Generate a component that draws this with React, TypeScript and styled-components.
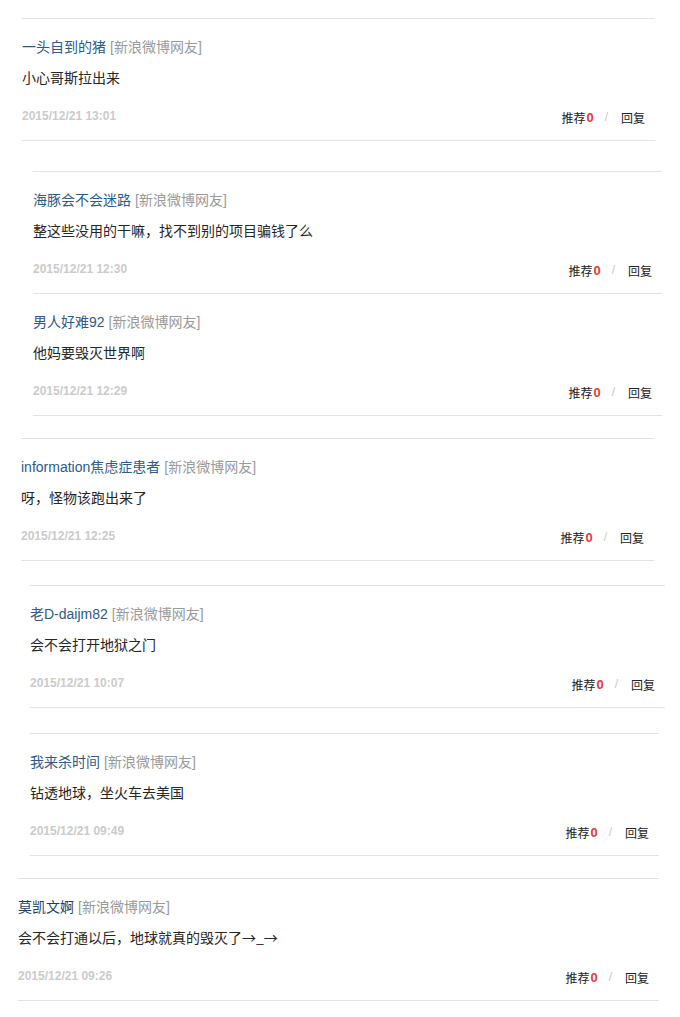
import { createGlobalStyle, styled } from 'styled-components'

const GlobalStyle = createGlobalStyle`
	html, body {
		margin: 0;
		padding: 0;
		background: #fff;
	}
	body {
		font-family: 'Liberation Sans', 'Noto Sans CJK SC', sans-serif;
		color: #333;
	}
`

const StyledPage = styled.div`
	width: 680px;
	padding-bottom: 16px;
`
const StyledGroup = styled.section<{ $left: number; $right: number; $top: number }>`
	margin: ${(p) => p.$top}px ${(p) => 680 - p.$right}px 0 ${(p) => p.$left}px;
	border-top: 1px solid #e3e3e3;
`
const StyledComment = styled.article`
	padding: 18px 10px 16px 0;
	border-bottom: 1px solid #e3e3e3;
`
const StyledHead = styled.div`
	font-size: 14px;
	line-height: 20px;
	height: 20px;
	white-space: nowrap;
`
const StyledName = styled.a<{ $dark?: boolean }>`
	color: ${(p) => (p.$dark ? '#1c3f63' : '#2d5a87')};
	text-decoration: none;
`
const StyledSource = styled.span`
	color: #9a9a9a;
	margin-left: 4px;
`
const StyledText = styled.p`
	margin: 10px 0 0;
	font-family: 'Noto Sans CJK SC', 'Liberation Sans', sans-serif;
	font-size: 14px;
	line-height: 20px;
	height: 20px;
	color: #262626;
`
const StyledFooter = styled.div`
	display: flex;
	align-items: center;
	justify-content: space-between;
	margin-top: 21px;
	height: 16px;
`
const StyledDate = styled.span`
	font-size: 12px;
	font-weight: bold;
	color: #cbcbcb;
`
const StyledActions = styled.div`
	display: flex;
	align-items: center;
	font-size: 12px;
	color: #222;
	margin-top: 2px;
`
const StyledCount = styled.b`
	color: #e4393c;
	font-size: 13px;
	margin-left: 1px;
`
const StyledSlash = styled.span`
	color: #c8c8c8;
	margin: 0 13px 0 11px;
`

interface Comment {
	name: string
	text: string
	date: string
	dark?: boolean
}

interface Group {
	left: number
	right: number
	top: number
	items: Comment[]
}

const groups: Group[] = [
	{
		left: 22,
		right: 655,
		top: 18,
		items: [{ name: '一头自到的猪', text: '小心哥斯拉出来', date: '2015/12/21 13:01' }],
	},
	{
		left: 33,
		right: 662,
		top: 30,
		items: [
			{ name: '海豚会不会迷路', text: '整这些没用的干嘛，找不到别的项目骗钱了么', date: '2015/12/21 12:30' },
			{ name: '男人好难92', text: '他妈要毁灭世界啊', date: '2015/12/21 12:29' },
		],
	},
	{
		left: 21,
		right: 654,
		top: 22,
		items: [{ name: 'information焦虑症患者', text: '呀，怪物该跑出来了', date: '2015/12/21 12:25' }],
	},
	{
		left: 30,
		right: 665,
		top: 24,
		items: [{ name: '老D-daijm82', text: '会不会打开地狱之门', date: '2015/12/21 10:07' }],
	},
	{
		left: 30,
		right: 659,
		top: 25,
		items: [{ name: '我来杀时间', text: '钻透地球，坐火车去美国', date: '2015/12/21 09:49' }],
	},
	{
		left: 18,
		right: 659,
		top: 22,
		items: [
			{ name: '莫凯文婀', text: '会不会打通以后，地球就真的毁灭了→_→', date: '2015/12/21 09:26', dark: true },
		],
	},
]

function CommentItem({ c }: { c: Comment }) {
	return (
		<StyledComment>
			<StyledHead>
				<StyledName $dark={c.dark}>{c.name}</StyledName>
				<StyledSource>[新浪微博网友]</StyledSource>
			</StyledHead>
			<StyledText>{c.text}</StyledText>
			<StyledFooter>
				<StyledDate>{c.date}</StyledDate>
				<StyledActions>
					<span>推荐</span>
					<StyledCount>0</StyledCount>
					<StyledSlash>/</StyledSlash>
					<span>回复</span>
				</StyledActions>
			</StyledFooter>
		</StyledComment>
	)
}

export default function App() {
	return (
		<StyledPage>
			<GlobalStyle />
			{groups.map((g, i) => (
				<StyledGroup key={i} $left={g.left} $right={g.right} $top={g.top}>
					{g.items.map((c, j) => (
						<CommentItem key={j} c={c} />
					))}
				</StyledGroup>
			))}
		</StyledPage>
	)
}
